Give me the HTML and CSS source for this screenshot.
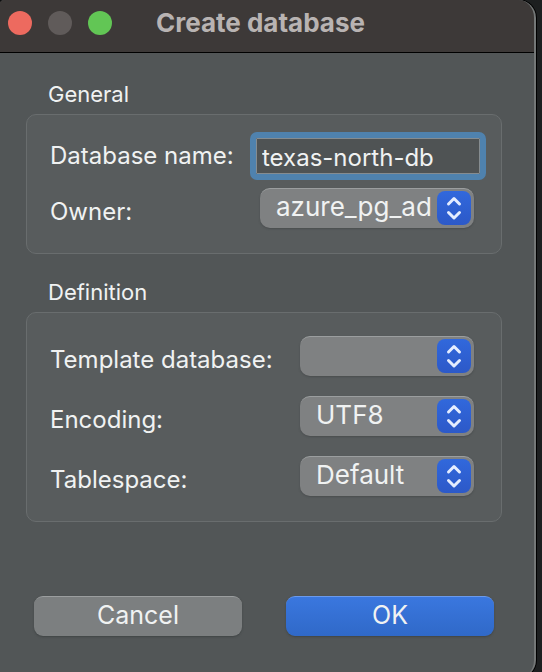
FILE: index.html
```html
<!DOCTYPE html>
<html lang="en">
<head>
<meta charset="utf-8">
<meta name="viewport" content="width=device-width, initial-scale=1">
<title>Create database</title>
<link rel="stylesheet" href="styles.css">
</head>
<body>
<main class="window">
  <header class="titlebar">
    <div class="lights">
      <button class="light light-close" type="button" aria-label="Close"></button>
      <button class="light light-minimize" type="button" aria-label="Minimize" disabled></button>
      <button class="light light-zoom" type="button" aria-label="Zoom"></button>
    </div>
    <h1 class="title">Create database</h1>
  </header>
  <form class="form">
    <section class="section">
      <h2 class="section-title">General</h2>
      <div class="group group-general">
        <div class="row">
          <label class="label" for="name">Database name:</label>
          <input class="input" id="name" type="text" value="texas-north-db">
        </div>
        <div class="row row-select">
          <label class="label" for="owner">Owner:</label>
          <div class="popup">
            <select class="select" id="owner"><option>azure_pg_ad</option></select>
            <svg class="stepper" viewBox="0 0 34 34" aria-hidden="true"><path d="M11.500 13l5.500-5.500 5.500 5.500M11.500 21.500l5.500 5.500 5.500-5.500"/></svg>
          </div>
        </div>
      </div>
    </section>
    <section class="section">
      <h2 class="section-title">Definition</h2>
      <div class="group group-definition">
        <div class="row row-select">
          <label class="label" for="template">Template database:</label>
          <div class="popup">
            <select class="select" id="template"><option></option></select>
            <svg class="stepper" viewBox="0 0 34 34" aria-hidden="true"><path d="M11.500 13l5.500-5.500 5.500 5.500M11.500 21.500l5.500 5.500 5.500-5.500"/></svg>
          </div>
        </div>
        <div class="row row-select">
          <label class="label" for="encoding">Encoding:</label>
          <div class="popup">
            <select class="select" id="encoding"><option>UTF8</option></select>
            <svg class="stepper" viewBox="0 0 34 34" aria-hidden="true"><path d="M11.500 13l5.500-5.500 5.500 5.500M11.500 21.500l5.500 5.500 5.500-5.500"/></svg>
          </div>
        </div>
        <div class="row row-select">
          <label class="label" for="tablespace">Tablespace:</label>
          <div class="popup">
            <select class="select" id="tablespace"><option>Default</option></select>
            <svg class="stepper" viewBox="0 0 34 34" aria-hidden="true"><path d="M11.500 13l5.500-5.500 5.500 5.500M11.500 21.500l5.500 5.500 5.500-5.500"/></svg>
          </div>
        </div>
      </div>
    </section>
    <footer class="actions">
      <button class="button" type="button">Cancel</button>
      <button class="button button-primary" type="submit">OK</button>
    </footer>
  </form>
</main>
</body>
</html>
```
FILE: styles.css
```css
* {
  box-sizing: border-box;
}

body {
  height: 100vh;
  margin: 0;
  padding-right: 6px;
  overflow: hidden;
  background: #1d1f20;
  color: #f0f2f2;
  font-family: Inter, "Liberation Sans", sans-serif;
}

.window {
  min-height: calc(100vh + 6px);
  overflow: hidden;
  border-right: 2px solid #747777;
  border-radius: 4px 18px 18px 0;
  background: #525657;
  box-shadow: 0 0 0 1px #000;
}

.titlebar {
  display: flex;
  align-items: center;
  height: 53px;
  padding: 0 8px 6px;
  border-bottom: 1px solid #000;
  background: #3d3938;
}

.lights {
  display: flex;
  gap: 16px;
}

.light {
  width: 24px;
  height: 24px;
  padding: 0;
  border: 0;
  border-radius: 50%;
}

.light-close {
  background: #ed6a5f;
}

.light-minimize {
  background: #605b5a;
}

.light-zoom {
  background: #62c655;
}

.title {
  margin: 0 0 0 44px;
  color: #b8b3b2;
  font-size: 26px;
  font-weight: 700;
  line-height: 32px;
}

.form {
  padding: 27px 32px 0 26px;
}

.section {
  margin-bottom: 24px;
}

.section-title {
  margin: 0 0 6px 22px;
  font-size: 22px;
  font-weight: 400;
  line-height: 28px;
}

.group {
  display: flex;
  flex-direction: column;
  padding: 23px 27px 25px 23px;
  border: 1px solid #696d6e;
  border-radius: 10px;
  background: #585c5d;
}

.group-general {
  gap: 14px;
}

.group-definition {
  gap: 20px;
}

.row {
  display: flex;
  align-items: center;
}

.label {
  flex: none;
  font-size: 24px;
  line-height: 32px;
}

.row-select .label {
  padding-top: 8px;
}

.group-general .label {
  width: 210px;
}

.group-definition .label {
  width: 250px;
}

.input {
  flex: 1;
  min-width: 0;
  height: 36px;
  margin: 0 -6px 0 -4px;
  padding: 2px 5px 0;
  border: 1px solid #858c90;
  outline: 6px solid #4f82ae;
  outline-offset: 0;
  border-radius: 1px;
  background: #4f5354;
  color: inherit;
  font: 24px/32px Inter, "Liberation Sans", sans-serif;
}

.popup {
  position: relative;
  flex: 1;
  min-width: 0;
}

.select {
  display: block;
  width: 100%;
  height: 40px;
  padding: 0 41px 4px 16px;
  border: 0;
  border-top: 1px solid #9b9e9f;
  border-radius: 10px;
  appearance: none;
  background: #7f8182;
  box-shadow: 0 1px 2px #34383966;
  color: inherit;
  font: 26px/32px Inter, "Liberation Sans", sans-serif;
}

.stepper {
  position: absolute;
  top: 3px;
  right: 3px;
  width: 34px;
  height: 34px;
  border-radius: 8px;
  background: linear-gradient(#3168dc, #2c59c8);
  fill: none;
  stroke: #e4edff;
  stroke-width: 3;
  stroke-linecap: round;
  stroke-linejoin: round;
  pointer-events: none;
}

.actions {
  display: flex;
  gap: 44px;
  padding: 50px 8px 0;
}

.button {
  flex: 1;
  height: 40px;
  padding: 0 0 4px;
  border: 0;
  border-top: 1px solid #9b9e9f;
  border-radius: 9px;
  background: #7c7f80;
  box-shadow: 0 1px 2px #34383999;
  color: inherit;
  font: 25px/32px Inter, "Liberation Sans", sans-serif;
}

.button-primary {
  border-top-color: #6b9aec;
  background: linear-gradient(#3a77df, #3069c8);
}
```
